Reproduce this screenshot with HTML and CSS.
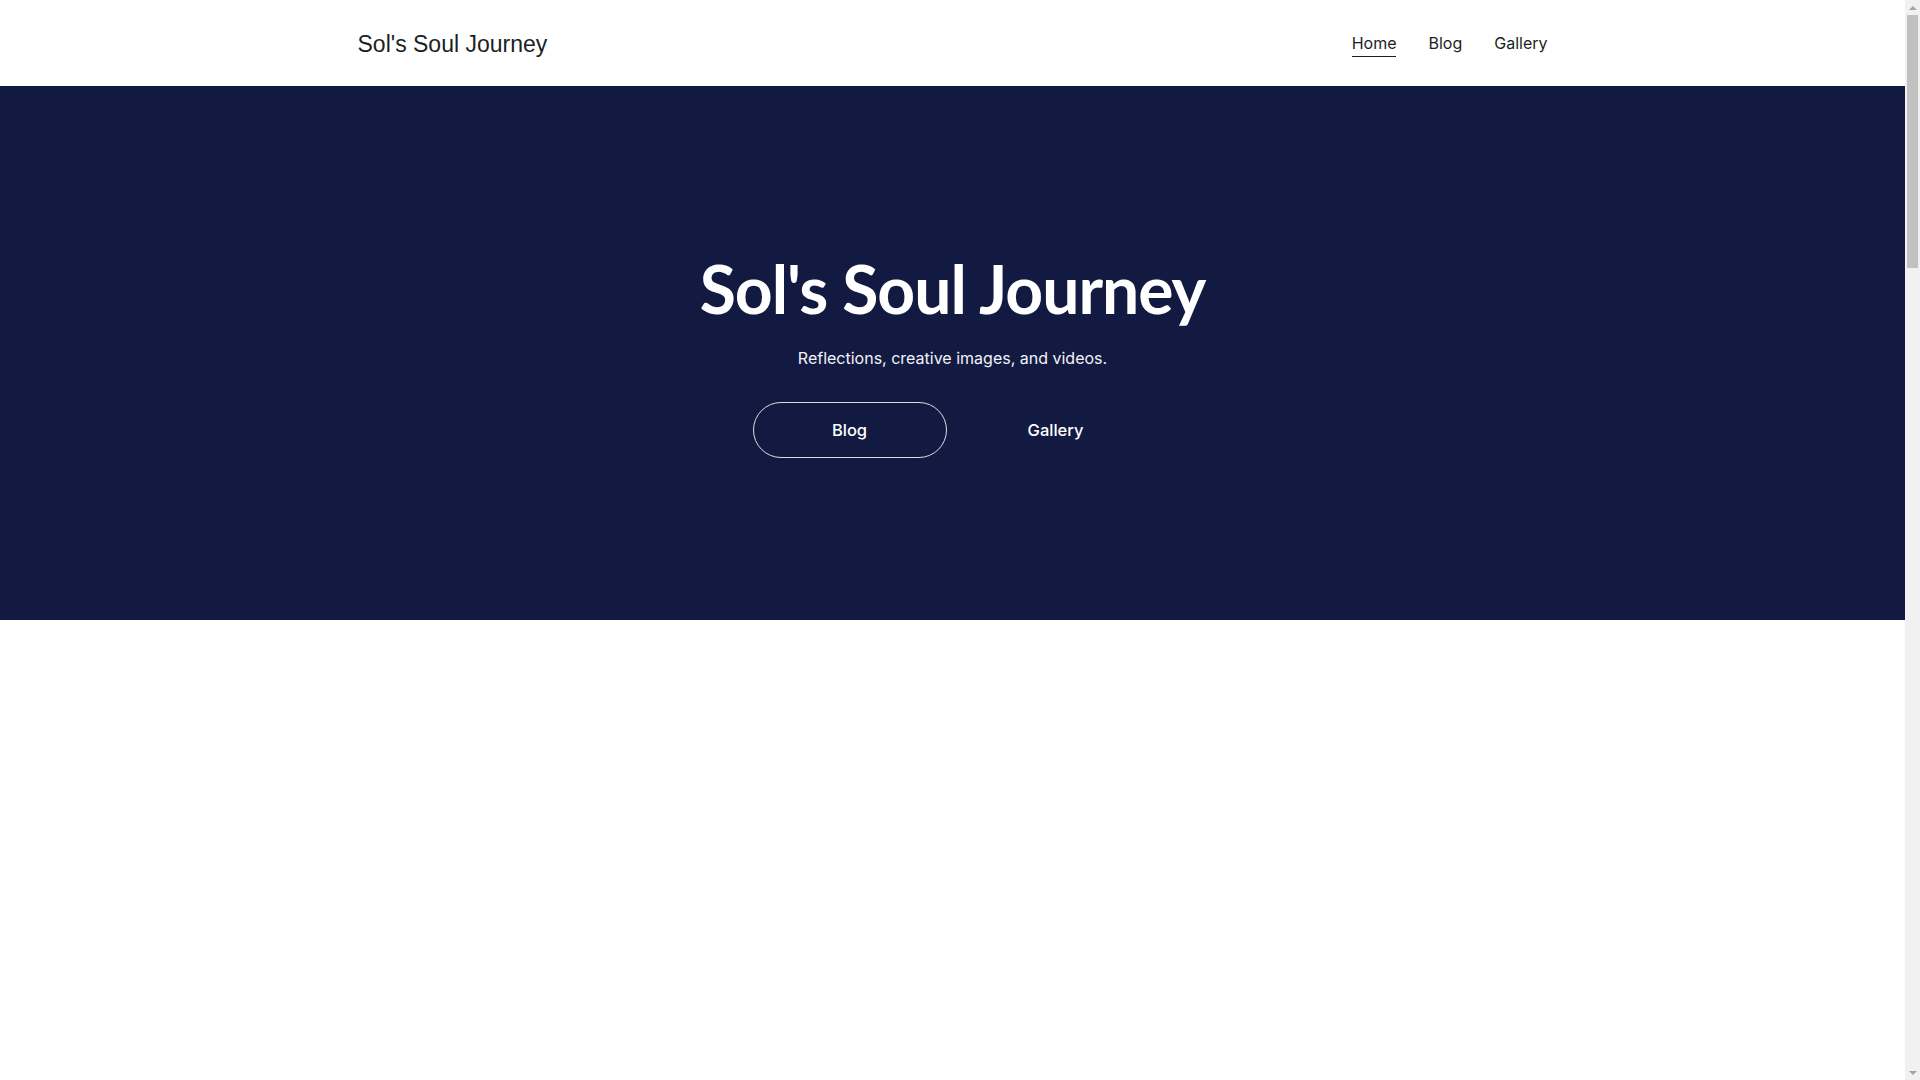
FILE: index.html
```html
<!DOCTYPE html>
<html lang="en">
<head>
<meta charset="utf-8">
<title>Sol's Soul Journey</title>
<link rel="stylesheet" href="styles.css">
</head>
<body>
<div class="page">
  <header class="site-header">
    <div class="container header-inner">
      <a class="logo" href="#">Sol's Soul Journey</a>
      <nav class="nav">
        <a class="nav-link active" href="#">Home</a>
        <a class="nav-link" href="#">Blog</a>
        <a class="nav-link" href="#">Gallery</a>
      </nav>
    </div>
  </header>
  <main>
    <section class="hero">
      <h1 class="hero-title">Sol's Soul Journey</h1>
      <p class="hero-sub">Reflections, creative images, and videos.</p>
      <div class="hero-actions">
        <a class="btn btn-outline" href="#">Blog</a>
        <a class="btn btn-ghost" href="#">Gallery</a>
      </div>
    </section>
    <section class="content"></section>
  </main>
</div>
<div class="scrollbar" aria-hidden="true">
  <div class="scroll-arrow up"></div>
  <div class="scroll-track"><div class="scroll-thumb"></div></div>
  <div class="scroll-arrow down"></div>
</div>
</body>
</html>
```
FILE: styles.css
```css
* { box-sizing: border-box; }
html, body { margin: 0; padding: 0; }
body {
  font-family: Inter, "Noto Sans", sans-serif;
  color: #1b1f24;
  background: #ffffff;
  overflow: hidden;
}
a { text-decoration: none; color: inherit; }

.page {
  width: 1905px;
  height: 1080px;
}

.container {
  width: 1190px;
  margin: 0 auto;
}

.site-header {
  height: 86px;
  background: #ffffff;
}
.header-inner {
  height: 100%;
  display: flex;
  align-items: center;
  justify-content: space-between;
}
.logo {
  font-family: "Liberation Sans", Arial, sans-serif;
  font-size: 23px;
  color: #1b1f24;
  margin-top: 2px;
}
.nav {
  display: flex;
  gap: 32px;
  align-items: center;
}
.nav-link {
  font-size: 16px;
  color: #1b1f24;
  padding-bottom: 3px;
  border-bottom: 1.5px solid transparent;
  margin-top: 4px;
}
.nav-link.active {
  border-bottom-color: #1b1f24;
}

.hero {
  background: #121a42;
  height: 534px;
  display: flex;
  flex-direction: column;
  align-items: center;
  justify-content: center;
  color: #ffffff;
  padding-top: 7px;
}
.hero-title {
  font-family: Lato, "Noto Sans", sans-serif;
  font-weight: 700;
  font-size: 66px;
  line-height: 1;
  letter-spacing: -1px;
  margin: 0;
}
.hero-sub {
  font-size: 16px;
  margin: 26px 0 0;
  color: #f2f3f7;
}
.hero-actions {
  display: flex;
  gap: 12px;
  margin-top: 34px;
}
.btn {
  width: 194px;
  height: 56px;
  border-radius: 28px;
  display: flex;
  align-items: center;
  justify-content: center;
  font-size: 16.5px;
  font-weight: 500;
  color: #ffffff;
  border: 1px solid transparent;
}
.btn-outline {
  border-color: rgba(255, 255, 255, 0.85);
}

.content {
  height: 460px;
  background: #ffffff;
}

.scrollbar {
  position: fixed;
  top: 0;
  right: 0;
  width: 15px;
  height: 1080px;
  background: #f1f1f1;
  display: flex;
  flex-direction: column;
}
.scroll-arrow {
  height: 15px;
  display: flex;
  align-items: center;
  justify-content: center;
}
.scroll-arrow.up::before {
  content: "";
  border-left: 4px solid transparent;
  border-right: 4px solid transparent;
  border-bottom: 4px solid #a3a3a3;
}
.scroll-arrow.down::before {
  content: "";
  border-left: 4px solid transparent;
  border-right: 4px solid transparent;
  border-top: 4px solid #a3a3a3;
}
.scroll-track {
  flex: 1;
  padding: 0 2px;
}
.scroll-thumb {
  height: 253px;
  background: #c1c1c1;
}
```
